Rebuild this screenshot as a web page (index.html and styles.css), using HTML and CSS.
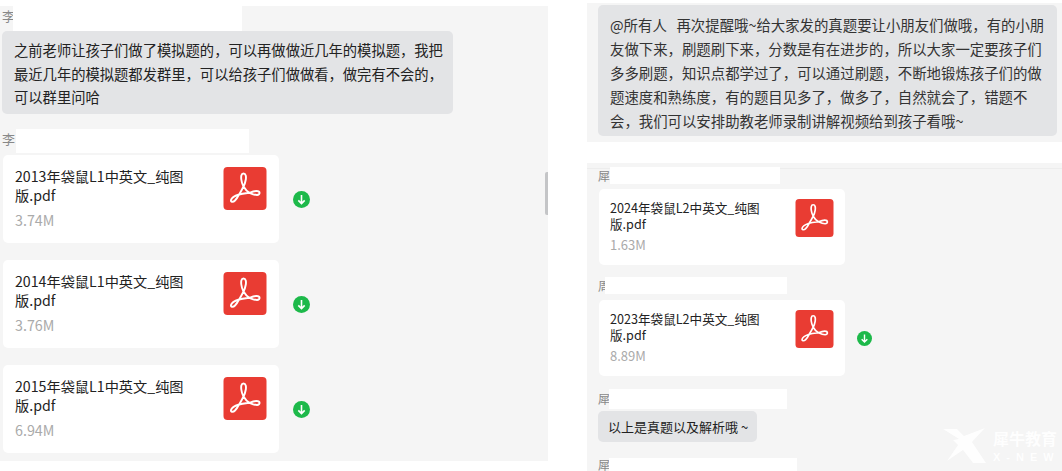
FILE: index.html
```html
<!DOCTYPE html>
<html lang="zh-CN">
<head>
<meta charset="utf-8">
<title>群聊记录</title>
<link rel="stylesheet" href="styles.css">
</head>
<body>
<svg class="defs" width="0" height="0" aria-hidden="true">
  <symbol id="pdf" viewBox="0 0 43 43">
    <rect width="43" height="43" rx="4" fill="#e93c33"/>
    <path d="M20 6.5C22.5 6.5 22.7 10 22.3 12.5C21.8 15.5 20.8 18 20 19.5C18.5 22.5 17 25.5 15.5 27.5C14.5 29.5 13 32 11.5 33.5C9.5 35.5 7 35 7.5 33C8 31 11.5 28.8 15.5 27.5C19 26.4 22.5 26.2 26 25.8C28.5 24.8 31 24 33 24C37 24 37 27.8 33.5 28C31 28 28.5 27 26 25.8C23.5 24.5 21.5 22 20 19.5C18.8 17 18 15 17.8 12.5C17.5 10 17.5 6.5 20 6.5Z" fill="none" stroke="#fff" stroke-width="1.9"/>
  </symbol>
  <symbol id="dl" viewBox="0 0 17 17">
    <circle cx="8.5" cy="8.5" r="8.5" fill="#1db94a"/>
    <path d="M8.5 4v8.4M5.3 9.4l3.2 3.2 3.2-3.2" fill="none" stroke="#fff" stroke-width="1.6"/>
  </symbol>
</svg>

<main class="page">
  <section class="panel panel-left">
    <div class="name-row">
      <span class="name">李</span>
      <span class="mask mask-l1"></span>
    </div>
    <p class="bubble bubble-left">之前老师让孩子们做了模拟题的，可以再做做近几年的模拟题，我把<br>最近几年的模拟题都发群里，可以给孩子们做做看，做完有不会的，<br>可以群里问哈</p>

    <div class="name-row name-row-l2">
      <span class="name">李</span>
      <span class="mask mask-l2"></span>
    </div>
    <div class="file-row">
      <div class="card">
        <div class="info">
          <div class="title">2013年袋鼠L1中英文_纯图版.pdf</div>
          <div class="size">3.74M</div>
        </div>
        <svg class="pdf"><use href="#pdf"/></svg>
      </div>
      <svg class="dl"><use href="#dl"/></svg>
    </div>
    <div class="file-row">
      <div class="card">
        <div class="info">
          <div class="title">2014年袋鼠L1中英文_纯图版.pdf</div>
          <div class="size">3.76M</div>
        </div>
        <svg class="pdf"><use href="#pdf"/></svg>
      </div>
      <svg class="dl"><use href="#dl"/></svg>
    </div>
    <div class="file-row">
      <div class="card">
        <div class="info">
          <div class="title">2015年袋鼠L1中英文_纯图版.pdf</div>
          <div class="size">6.94M</div>
        </div>
        <svg class="pdf"><use href="#pdf"/></svg>
      </div>
      <svg class="dl"><use href="#dl"/></svg>
    </div>
    <div class="scrollbar"></div>
  </section>

  <div class="right">
    <section class="panel panel-top">
      <p class="bubble bubble-top">@所有人&nbsp;&nbsp;&nbsp;再次提醒哦~给大家发的真题要让小朋友们做哦，有的小朋<br>友做下来，刷题刷下来，分数是有在进步的，所以大家一定要孩子们<br>多多刷题，知识点都学过了，可以通过刷题，不断地锻炼孩子们的做<br>题速度和熟练度，有的题目见多了，做多了，自然就会了，错题不<br>会，我们可以安排助教老师录制讲解视频给到孩子看哦~</p>
    </section>

    <section class="panel panel-bottom">
      <div class="name-row small r1">
        <span class="name">犀</span>
        <span class="mask mask-r1"></span>
      </div>
      <div class="file-row small">
        <div class="card">
          <div class="info">
            <div class="title">2024年袋鼠L2中英文_纯图版.pdf</div>
            <div class="size">1.63M</div>
          </div>
          <svg class="pdf"><use href="#pdf"/></svg>
        </div>
      </div>
      <div class="name-row small r2">
        <span class="name">周</span>
        <span class="mask mask-r2"></span>
      </div>
      <div class="file-row small">
        <div class="card">
          <div class="info">
            <div class="title">2023年袋鼠L2中英文_纯图版.pdf</div>
            <div class="size">8.89M</div>
          </div>
          <svg class="pdf"><use href="#pdf"/></svg>
        </div>
        <svg class="dl"><use href="#dl"/></svg>
      </div>
      <div class="name-row small r3">
        <span class="name">犀</span>
        <span class="mask mask-r3"></span>
      </div>
      <p class="bubble bubble-short">以上是真题以及解析哦 ~</p>
      <div class="name-row small r4">
        <span class="name">犀</span>
        <span class="mask mask-r4"></span>
      </div>
    </section>
  </div>
</main>

<div class="watermark">
  <svg class="wm-logo" viewBox="0 0 43 35"><path d="M0 1H14L21 8L42 0L29 14L43 35H30L20 22L4 33L15 17L10 12L16 11Z" fill="#fff"/></svg>
  <div class="wm-text">
    <div class="wm-cn">犀牛教育</div>
    <div class="wm-en">X-NEW</div>
  </div>
</div>
</body>
</html>
```

FILE: styles.css
```css
* {
  box-sizing: border-box;
}

html,
body {
  margin: 0;
  height: 471px;
  overflow: hidden;
  background: #fff;
}

body {
  position: relative;
  font-family: "Noto Sans CJK SC", "Noto Sans", sans-serif;
  color: #222;
}

.defs {
  position: absolute;
}

.page {
  display: flex;
  align-items: flex-start;
  gap: 39px;
}

.panel {
  background: #f5f5f5;
}

.panel-left {
  position: relative;
  width: 548px;
  height: 455px;
  margin-top: 6px;
}

.right {
  display: flex;
  flex-direction: column;
  width: 475px;
  padding-top: 3px;
}

.panel-top {
  height: 139px;
  padding: 2px 5px 0 11px;
}

.panel-bottom {
  height: 308px;
  margin-top: 21px;
  padding: 4px 0 0 11px;
  overflow: hidden;
  background: linear-gradient(#f5f5f5 5px, #ededed 5px, #ededed 6px, #f5f5f5 6px);
}

.name-row {
  display: flex;
  align-items: center;
  height: 25px;
  padding-left: 2px;
}

.name-row-l2 {
  height: 24px;
  margin-top: 15px;
}

.name {
  flex: none;
  margin-bottom: 5px;
  font-size: 13px;
  line-height: 16px;
  color: #888;
}

.mask {
  display: block;
  align-self: stretch;
  background: #fff;
}

.mask-l1 {
  width: 229px;
  margin-left: -2px;
}

.mask-l2 {
  width: 233px;
  margin-left: 1px;
}

.bubble {
  margin: 0;
  background: #e3e4e6;
  border-radius: 5px;
  white-space: nowrap;
}

.bubble-left {
  width: 451px;
  height: 83px;
  margin-left: 2px;
  padding: 7px 12px;
  font-size: 14.3px;
  line-height: 23.5px;
}

.bubble-top {
  height: 131px;
  padding: 8px 12px;
  font-size: 14.4px;
  line-height: 24px;
  color: #333;
}

.file-row {
  display: flex;
  align-items: center;
  gap: 14px;
  margin: 2px 0 17px 3px;
}

.file-row + .file-row {
  margin-top: 0;
}

.card {
  display: flex;
  justify-content: space-between;
  width: 276px;
  height: 88px;
  padding: 12px 12px 0;
  background: #fff;
  border-radius: 5px;
}

.info {
  width: 170px;
}

.title {
  font-size: 14.2px;
  line-height: 19px;
}

.size {
  margin-top: 6px;
  font-size: 14.3px;
  line-height: 18px;
  color: #aaa;
}

.pdf {
  flex: none;
  width: 44px;
  height: 43px;
}

.dl {
  flex: none;
  width: 17px;
  height: 17px;
}

.scrollbar {
  position: absolute;
  top: 166px;
  right: 0;
  width: 3px;
  height: 43px;
  background: #c4c5c7;
  border-radius: 2px 0 0 2px;
}

.name-row.small {
  height: 17px;
  padding-left: 0;
}

.name-row.small .name {
  margin-bottom: 0;
  font-size: 12px;
}

.mask-r1 {
  width: 170px;
}

.mask-r2 {
  width: 182px;
  margin-left: -5px;
}

.mask-r3 {
  width: 178px;
  margin-left: -1px;
}

.mask-r4 {
  width: 188px;
  margin-left: -1px;
}

.r2 {
  margin-top: 12px;
}

.name-row.small.r3 {
  height: 20px;
  margin-top: 13px;
}

.name-row.small.r4 {
  height: 13px;
  margin-top: 16px;
}

.file-row.small {
  gap: 12px;
  margin: 5px 0 0 1px;
}

.r2 + .file-row.small {
  margin-top: 6px;
}

.small .card {
  width: 246px;
  height: 76px;
  padding: 10px 11px 0;
}

.small .info {
  width: 152px;
}

.small .title {
  font-size: 12.6px;
  line-height: 16px;
  padding-top: 1px;
}

.small .size {
  margin-top: 5px;
  font-size: 13px;
  line-height: 16px;
}

.small .pdf {
  width: 39px;
  height: 38px;
}

.small .dl {
  width: 15px;
  height: 15px;
}

.bubble-short {
  width: 159px;
  height: 31px;
  margin-top: 2px;
  padding-left: 10px;
  font-size: 13px;
  line-height: 32px;
}

.watermark {
  position: absolute;
  left: 943px;
  top: 428px;
  display: flex;
  gap: 7px;
  color: #fff;
  opacity: 0.9;
}

.wm-logo {
  width: 43px;
  height: 35px;
}

.wm-text {
  width: 66px;
}

.wm-cn {
  font-size: 16px;
  line-height: 20px;
  font-weight: 700;
  white-space: nowrap;
}

.wm-en {
  margin-top: 2px;
  font-family: "Liberation Sans", sans-serif;
  font-size: 11px;
  font-weight: 700;
  line-height: 14px;
  letter-spacing: 6px;
  white-space: nowrap;
}
```
